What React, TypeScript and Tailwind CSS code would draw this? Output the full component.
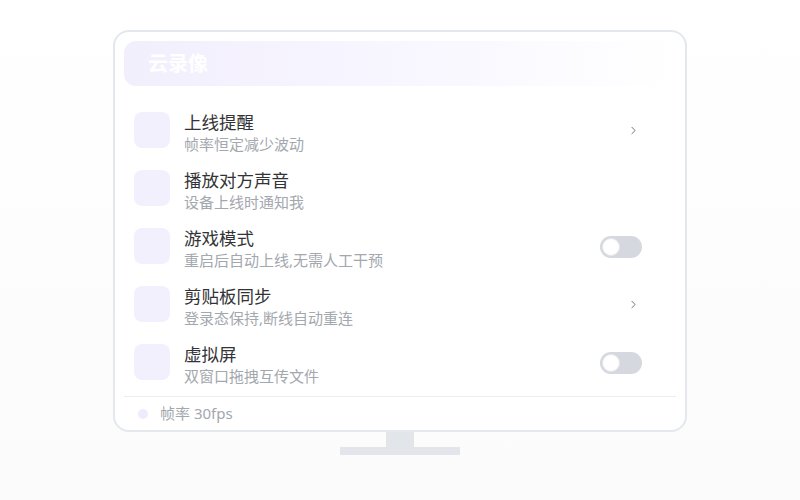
import { ChevronRight } from "lucide-react";

type Row = {
  title: string;
  desc: string;
  action: "chevron" | "toggle" | "none";
};

const rows: Row[] = [
  { title: "上线提醒", desc: "帧率恒定减少波动", action: "chevron" },
  { title: "播放对方声音", desc: "设备上线时通知我", action: "none" },
  { title: "游戏模式", desc: "重启后自动上线,无需人工干预", action: "toggle" },
  { title: "剪贴板同步", desc: "登录态保持,断线自动重连", action: "chevron" },
  { title: "虚拟屏", desc: "双窗口拖拽互传文件", action: "toggle" },
];

function Toggle() {
  return (
    <div className="flex h-[22px] w-[42px] items-center rounded-full bg-[#d5d8de] px-[2px]">
      <div className="h-[18px] w-[18px] rounded-full border border-[#e5e7eb] bg-white" />
    </div>
  );
}

export default function App() {
  return (
    <div
      className="flex h-[500px] w-[800px] flex-col items-center bg-gradient-to-b from-white to-[#fbfbfc] pt-[30px]"
      style={{ fontFamily: '"Noto Sans", "Noto Sans CJK SC", sans-serif' }}
    >
      {/* 屏幕 */}
      <div className="flex h-[402px] w-[574px] flex-col rounded-2xl border-2 border-[#e4e7ec] bg-white p-[9px] pb-0">
        {/* 标题栏 */}
        <div className="flex h-[45px] shrink-0 items-center rounded-xl bg-gradient-to-r from-[#f2effd] via-[#f8f6ff] to-white pl-[24px]">
          <span className="text-[20px] font-semibold leading-none text-white">云录像</span>
        </div>

        {/* 设置列表 */}
        <div className="flex flex-col gap-[14px] pt-[24px] pl-[10px] pr-[34px]">
          {rows.map((row) => (
            <div key={row.title} className="flex h-[44px] items-start">
              <div className="mt-[2px] h-[36px] w-[36px] shrink-0 rounded-lg bg-[#f3f0fe]" />
              <div className="ml-[14px] flex flex-1 flex-col">
                <span className="text-[17.5px] leading-[24px] text-[#333336]">{row.title}</span>
                <span className="text-[15px] leading-[20px] text-[#a3a7ae]">{row.desc}</span>
              </div>
              <div className="flex h-[41px] items-center">
                {row.action === "chevron" && (
                  <ChevronRight size={13} strokeWidth={1.8} className="mr-[2px] text-[#6b7280]" />
                )}
                {row.action === "toggle" && <Toggle />}
              </div>
            </div>
          ))}
        </div>

        {/* 底部状态 */}
        <div className="mt-[10px] flex h-[34px] items-center border-t border-[#eceef1] pl-[14px]">
          <div className="h-[10px] w-[10px] rounded-full bg-[#efebfd]" />
          <span className="ml-[12px] text-[15px] leading-none text-[#a3a7ae]">帧率 30fps</span>
        </div>
      </div>

      {/* 支架 */}
      <div className="h-[15px] w-[28px] bg-[#e2e5ea]" />
      <div className="h-[8px] w-[120px] bg-[#e2e5ea]" />
    </div>
  );
}
